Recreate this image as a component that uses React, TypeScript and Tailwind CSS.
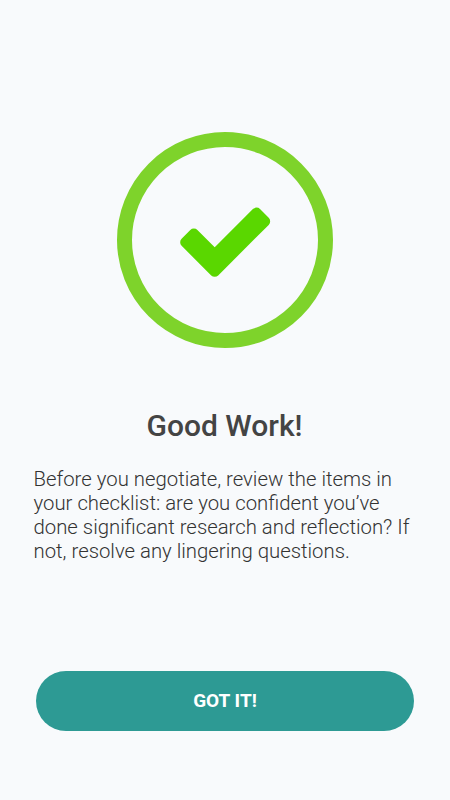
interface SuccessMarkProps {
    className?: string;
}

// Ring with a chunky rounded tick in the middle
const SuccessMark: React.FC<SuccessMarkProps> = ({ className }) => (
    <svg viewBox="0 0 216 216" fill="none" className={className} aria-hidden="true">
        <circle cx="108" cy="108" r="100.5" stroke="#7ED32B" strokeWidth="15" />
        <path
            d="M97.7 115.3 L135.9 77.1 A5 5 0 0 1 143 77.1 L151.7 85.8 A5 5 0 0 1 151.7 92.9 L101.2 143.4 A5 5 0 0 1 94.2 143.4 L64.6 113.8 A5 5 0 0 1 64.6 106.8 L73.3 98 A5 5 0 0 1 80.4 98 Z"
            fill="#5AD700"
        />
    </svg>
);

export default function App() {
    return (
        <main className="flex h-screen w-full flex-col items-center bg-[#f8fafc] pt-[132px] font-['Roboto',sans-serif]">
            <SuccessMark className="size-[216px] shrink-0" />

            <h1 className="mt-[60px] pr-px text-[30px] leading-9 font-medium text-[#444444]">Good Work!</h1>

            <p className="mt-[23px] w-full pr-8 pl-[33.5px] text-[20.33px] leading-6 font-light text-[#333333]">
                Before you negotiate, review the items in
                <br />
                your checklist: are you confident you’ve
                <br />
                done significant research and reflection? If
                <br />
                not, resolve any lingering questions.
            </p>

            <div className="mt-auto w-full px-9 pb-[69px]">
                <button
                    type="button"
                    className="flex h-[60px] w-full items-center justify-center rounded-full bg-[#2d9a94] text-[19px] font-bold text-white"
                >
                    GOT IT!
                </button>
            </div>
        </main>
    );
}
